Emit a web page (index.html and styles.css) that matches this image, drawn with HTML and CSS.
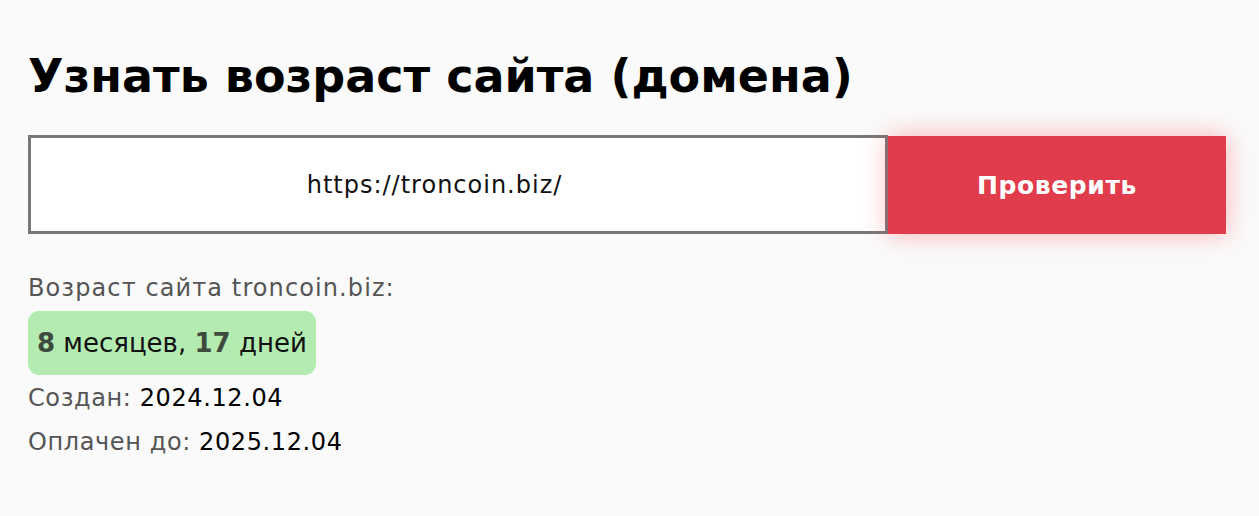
FILE: index.html
```html
<!DOCTYPE html>
<html lang="ru">
<head>
<meta charset="utf-8">
<link rel="stylesheet" href="styles.css">
</head>
<body>
<main class="page">
  <h1 class="title">Узнать возраст сайта (домена)</h1>
  <form class="check">
    <div class="field">https://troncoin.biz/</div>
    <button type="button" class="btn">Проверить</button>
  </form>
  <div class="result">
    <div class="label">Возраст сайта troncoin.biz:</div>
    <div class="age"><b>8</b> месяцев, <b>17</b> дней</div>
    <div class="row">Создан: <span class="val">2024.12.04</span></div>
    <div class="row">Оплачен до: <span class="val">2025.12.04</span></div>
  </div>
</main>
</body>
</html>
```

FILE: styles.css
```css
html, body {
  margin: 0;
  padding: 0;
  background: #fafafa;
}
body {
  font-family: "DejaVu Sans", "Noto Sans", sans-serif;
  color: #000;
}
.page {
  padding: 44px 33px 0 28px;
}
.title {
  margin: 0;
  font-size: 46px;
  font-weight: 700;
  line-height: 64px;
}
.check {
  display: flex;
  margin-top: 27px;
  height: 99px;
}
.field {
  flex: 0 0 860px;
  box-sizing: border-box;
  border: 3px solid #777;
  background: #fff;
  display: flex;
  align-items: center;
  justify-content: center;
  font-size: 24px;
  letter-spacing: 1px;
  color: #111;
  padding-right: 47px;
}
.btn {
  flex: 0 0 338px;
  border: 0;
  background: #e03c4c;
  color: #fff;
  font-family: inherit;
  font-size: 25px;
  letter-spacing: 0.6px;
  font-weight: 700;
  box-shadow: 0 0 24px rgba(255, 60, 70, 0.38);
  margin: 1px 0 0;
}
.result {
  margin-top: 36px;
  display: flex;
  flex-direction: column;
  align-items: flex-start;
  font-size: 24px;
}
.label {
  color: #555;
  line-height: 36px;
  letter-spacing: 1.1px;
}
.age {
  margin-top: 5px;
  background: #b3ebb0;
  border-radius: 11px;
  padding: 0 9px;
  height: 64px;
  display: flex;
  align-items: center;
  color: #111;
  font-size: 26px;
  white-space: pre;
}
.age b {
  color: #3f4a3f;
}
.row {
  color: #555;
  line-height: 44px;
  margin-top: 1px;
  letter-spacing: 0.6px;
}
.row + .row {
  margin-top: 0;
}
.val {
  color: #000;
}
```
